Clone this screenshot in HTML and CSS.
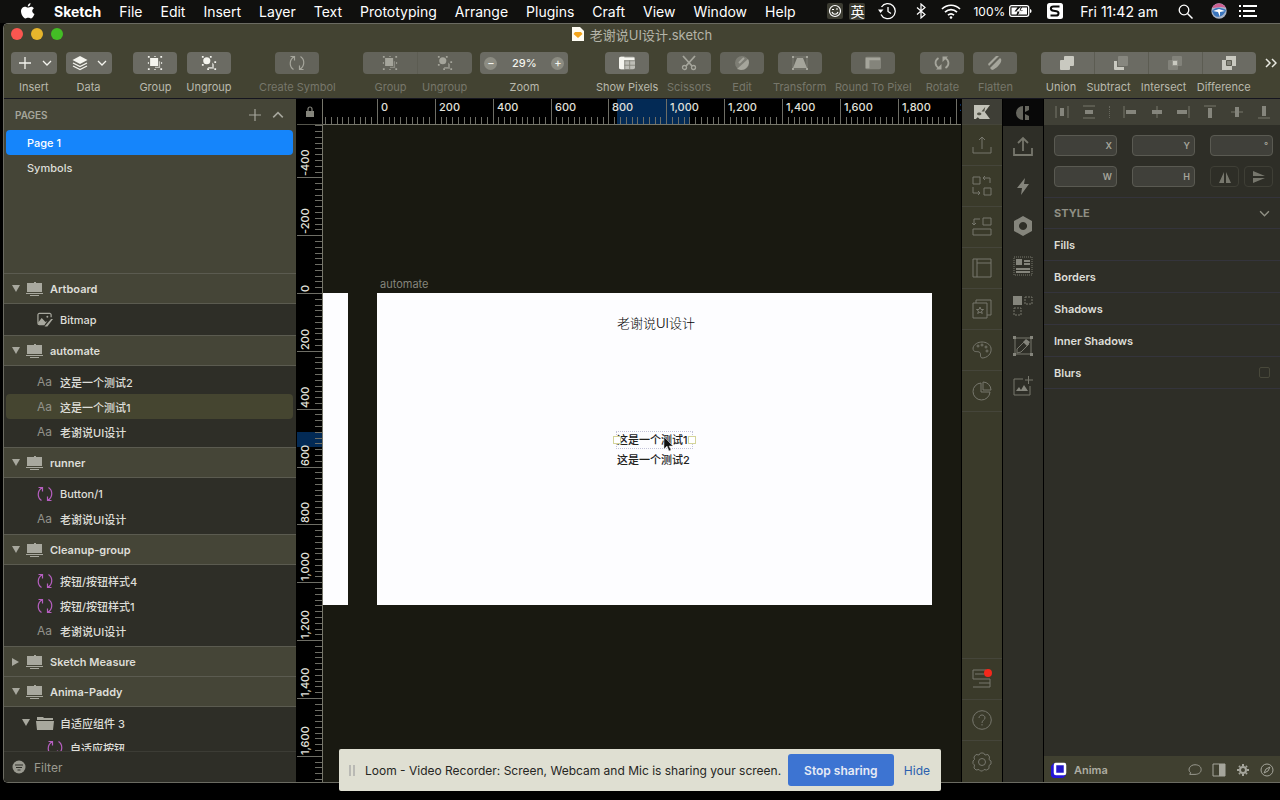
FILE: index.html
```
<!DOCTYPE html>
<html lang="zh-CN">

<head>
    <meta charset="UTF-8">
    <title>老谢说UI设计.sketch</title>
    <link rel="stylesheet" href="styles.css">
</head>

<body>
    <svg class="sprite" aria-hidden="true">
        <symbol id="chevron" viewBox="0 0 10 10"><path d="M1 3l4 4 4-4" fill="none" stroke="currentColor" stroke-width="1.3"/></symbol>
        <symbol id="artboard" viewBox="0 0 18 14"><path d="M8 0h2v1h6v9H1V1h7zM0 11h17v1H0zM4 13h9v1H4z" fill="currentColor"/></symbol>
        <symbol id="sync" viewBox="0 0 16 16"><path d="M5.500 1.500C0 4.500 0 11.500 4.500 14.500M1.500 1.500h4V5.500M10.500 14.500C16 11.500 16 4.500 11.500 1.500M14.500 14.500h-4V10.500" fill="none" stroke="currentColor" stroke-width="1.200"/></symbol>
        <symbol id="group" viewBox="0 0 18 18"><path d="M9 14h5V7" fill="none" stroke="currentColor" stroke-width="1.500" opacity=".6"/><path d="M3.500 3.500h9v9h-9z" fill="currentColor"/><path d="M1 1h2v2H1zM15 1h2v2h-2zM1 15h2v2H1zM15 15h2v2h-2zM8 1h2v1H8zM1 8h1v2H1zM16 8h1v2h-1zM8 16h2v1H8z" fill="currentColor"/></symbol>
        <symbol id="ungroup" viewBox="0 0 18 18"><circle cx="6.500" cy="6.500" r="4" fill="currentColor"/><path d="M12.500 8.500v5h-5l2 2h5v-5z" fill="currentColor" opacity=".7"/><path d="M1 1h2v2H1zM10 1h2v2h-2zM1 10h2v2H1zM7 15h2v2H7zM15 15h2v2h-2zM15 7h2v2h-2z" fill="currentColor"/></symbol>
    </svg>

    <header class="menubar">
        <nav class="menus">
            <svg class="apple" viewBox="0 0 14 16"><path d="M9.500 0C9.700 1.800 8.300 3.500 6.800 3.500 6.600 1.900 8 .3 9.500 0zM12.900 5.300c-2.500 1.600-2 4.600.6 5.700-.8 2.200-2.100 4.400-3.500 4.400-1.100 0-1.500-.7-2.800-.7s-1.700.7-2.700.7C2.200 15.400 0 11 0 8.300 0 3.900 4 3.200 5.200 3.900c.8.400 1.300.6 1.900.6.900 0 1.700-.8 3.200-.8 1.100 0 2 .6 2.600 1.600z" fill="currentColor"/></svg>
            <button class="app-name">Sketch</button>
            <button>File</button>
            <button>Edit</button>
            <button>Insert</button>
            <button>Layer</button>
            <button>Text</button>
            <button>Prototyping</button>
            <button>Arrange</button>
            <button>Plugins</button>
            <button>Craft</button>
            <button>View</button>
            <button>Window</button>
            <button>Help</button>
        </nav>
        <div class="status">
            <svg class="chip" viewBox="0 0 16 16"><rect width="16" height="16" rx="2" fill="#3c3c32"/><g fill="none" stroke="currentColor" stroke-width="1.200"><circle cx="8" cy="8" r="5.500"/><path d="M5 9c1 3 5 3 6 0M5 6.500h2M9 6h2"/></g></svg>
            <span class="ime">英</span>
            <svg class="clock" viewBox="0 0 18 18"><path d="M3.500 5A7.500 7.500 0 1 1 3 12.500M10 5v4.500l3 2" fill="none" stroke="currentColor" stroke-width="1.300"/><path d="M0 7.500h5.500L2.500 11z" fill="currentColor"/></svg>
            <svg class="bluetooth" viewBox="0 0 10 16"><path d="M1 4.500l8 7L5 15V1l4 3.500-8 7" fill="none" stroke="currentColor" stroke-width="1.200"/></svg>
            <svg class="wifi" viewBox="0 0 20 15"><path d="M1 5c5-5 13-5 18 0M4 8.200c3.500-3.500 8.500-3.500 12 0M7 11.200c2-1.800 4-1.800 6 0" fill="none" stroke="currentColor" stroke-width="1.700"/><circle cx="10" cy="13.500" r="1.300" fill="currentColor"/></svg>
            <span class="percent">100%</span>
            <svg class="battery" viewBox="0 0 23 12"><rect x=".7" y=".7" width="19" height="10.600" rx="2" fill="none" stroke="currentColor" stroke-width="1.300"/><path d="M2.500 2.500h6l-3 4h3l-1 3h-5zM13 2.500h5v7H10l4-4.500h-2.500zM21 4c2 0 2 4 0 4z" fill="currentColor"/><path d="M12 1.500L7 6.500h3.500L9 10.500l5-5h-3.500z" fill="currentColor"/></svg>
            <svg class="sogou" viewBox="0 0 16 16"><rect width="16" height="16" rx="2.500" fill="currentColor"/><path d="M12.500 3.500H6.500c-3.500 0-3.500 3.800 0 4.200l3 .5c3 .5 2.500 4.300-.5 4.300H3.500" fill="none" stroke="#0a0a08" stroke-width="2"/></svg>
            <time class="time">Fri 11:42 am</time>
            <svg class="search" viewBox="0 0 15 15"><circle cx="6" cy="6" r="4.800" fill="none" stroke="currentColor" stroke-width="1.300"/><path d="M9.500 9.500l5 5" stroke="currentColor" stroke-width="1.500"/></svg>
            <svg class="siri" viewBox="0 0 16 16"><circle cx="8" cy="8" r="7.700" fill="#a9b4c8"/><path d="M1 5c3-6 11-6 14 0-5-2-9 0-14 0z" fill="#cf5e91"/><path d="M1 8c4-5 10-3 14-1-2 6-8 9-12 5z" fill="#3a75bd"/><path d="M2 8l6-2 6 2-5 1v5L7 9z" fill="#fff"/></svg>
            <svg class="list" viewBox="0 0 18 14"><path d="M0 1h2v2H0zM4 1h14v2H4zM0 6h2v2H0zM4 6h12v2H4zM0 11h2v2H0zM4 11h14v2H4z" fill="currentColor"/></svg>
        </div>
    </header>

    <div class="window">
        <header class="chrome">
            <div class="titlebar">
                <div class="lights">
                    <button class="light close" aria-label="Close"></button>
                    <button class="light minimise" aria-label="Minimise"></button>
                    <button class="light zoom" aria-label="Full screen"></button>
                </div>
                <h1 class="title">
                    <svg class="doc" viewBox="0 0 12 14"><path d="M0 0h8l4 4v10H0z" fill="#fffdf4"/><path d="M3 5h6l1.500 2L6 11 1.500 7z" fill="#f3a51b"/></svg>
                    老谢说UI设计.sketch
                </h1>
            </div>
            <div class="toolbar">
                <div class="tool">
                    <button class="well wide" aria-label="Insert"><svg class="icon" viewBox="0 0 16 16"><path d="M8 2v12M2 8h12" stroke="currentColor" stroke-width="1.300"/></svg><svg class="drop"><use href="#chevron"/></svg></button>
                    <span>Insert</span>
                </div>
                <div class="tool">
                    <button class="well wide" aria-label="Data"><svg class="icon" viewBox="0 0 16 16"><path d="M8 1l7.500 4L8 9 .5 5z" fill="currentColor"/><path d="M1 8l7 3.500L15 8M1 11l7 3.500 7-3.500" fill="none" stroke="currentColor" stroke-width="1.300"/></svg><svg class="drop"><use href="#chevron"/></svg></button>
                    <span>Data</span>
                </div>
                <div class="tool near">
                    <button class="well" aria-label="Group"><svg class="icon"><use href="#group"/></svg></button>
                    <span>Group</span>
                </div>
                <div class="tool">
                    <button class="well" aria-label="Ungroup"><svg class="icon"><use href="#ungroup"/></svg></button>
                    <span>Ungroup</span>
                </div>
                <div class="tool apart off">
                    <button class="well" aria-label="Create Symbol"><svg class="icon"><use href="#sync"/></svg></button>
                    <span>Create Symbol</span>
                </div>
                <div class="tool apart off pair">
                    <div class="segments">
                        <button aria-label="Group"><svg class="icon"><use href="#group"/></svg></button>
                        <button aria-label="Ungroup"><svg class="icon"><use href="#ungroup"/></svg></button>
                    </div>
                    <div class="names"><span>Group</span><span>Ungroup</span></div>
                </div>
                <div class="tool">
                    <div class="well stepper">
                        <button aria-label="Zoom out">−</button>
                        <span>29%</span>
                        <button aria-label="Zoom in">+</button>
                    </div>
                    <span>Zoom</span>
                </div>
                <div class="tool apart">
                    <button class="well" aria-label="Show Pixels"><svg class="icon" viewBox="0 0 18 16"><rect y="1" width="18" height="14" rx="2" fill="currentColor" opacity=".6"/><path d="M2 1h4v14H2a2 2 0 0 1-2-2V3a2 2 0 0 1 2-2zM6 2h11v3H6z" fill="currentColor"/><path d="M6 5.500h12M6 10.500h12M6.500 5v10M12 5v10" stroke="#85857b" fill="none"/></svg></button>
                    <span>Show Pixels</span>
                </div>
                <div class="tool off">
                    <button class="well" aria-label="Scissors"><svg class="icon" viewBox="0 0 16 16"><path d="M2 1l9 10M14 1L5 11" stroke="currentColor" stroke-width="1.800"/><g fill="none" stroke="currentColor" stroke-width="1.300"><circle cx="3.500" cy="12.500" r="2"/><circle cx="12.500" cy="12.500" r="2"/></g></svg></button>
                    <span>Scissors</span>
                </div>
                <div class="tool off">
                    <button class="well" aria-label="Edit"><svg class="icon" viewBox="0 0 16 16"><circle cx="8" cy="8" r="7" fill="currentColor" opacity=".4"/><path d="M3 14L14 4c3 5-2 11-7 11z" fill="currentColor"/><path d="M5 8l5-5" stroke="currentColor" stroke-width="2"/></svg></button>
                    <span>Edit</span>
                </div>
                <div class="tool off">
                    <button class="well" aria-label="Transform"><svg class="icon" viewBox="0 0 16 16"><path d="M5 3h6l4 10H1z" fill="currentColor"/><path d="M1 2h14v12H1z" fill="none" stroke="currentColor" opacity=".4"/><path d="M0 1h2v2H0zM14 1h2v2h-2zM0 13h2v2H0zM14 13h2v2h-2z" fill="currentColor"/></svg></button>
                    <span>Transform</span>
                </div>
                <div class="tool off">
                    <button class="well" aria-label="Round To Pixel"><svg class="icon" viewBox="0 0 18 16"><rect y="1" width="18" height="14" rx="2" fill="currentColor" opacity=".5"/><path d="M1 2h16v3H5v9H1z" fill="currentColor"/></svg></button>
                    <span>Round To Pixel</span>
                </div>
                <div class="tool off">
                    <button class="well" aria-label="Rotate"><svg class="icon" viewBox="0 0 16 16"><path d="M4.500 3C0 6 1 11 5 13M11.500 13c4.500-3 3.500-8-.5-10" fill="none" stroke="currentColor" stroke-width="1.800"/><path d="M2 14.500h5.500V9zM14 1.500H8.500V7z" fill="currentColor"/></svg></button>
                    <span>Rotate</span>
                </div>
                <div class="tool off">
                    <button class="well" aria-label="Flatten"><svg class="icon" viewBox="0 0 16 16"><path d="M1 9l8-8h3L2 11zM3 13L13 3c4 2-2 10-8 12z" fill="currentColor"/></svg></button>
                    <span>Flatten</span>
                </div>
                <div class="tool booleans">
                    <div class="segments">
                        <button aria-label="Union"><svg class="icon" viewBox="0 0 16 16"><path d="M6 1h8a1 1 0 0 1 1 1v8a1 1 0 0 1-1 1h-3v3a1 1 0 0 1-1 1H2a1 1 0 0 1-1-1V6a1 1 0 0 1 1-1h3V2a1 1 0 0 1 1-1z" fill="currentColor"/></svg></button>
                        <button aria-label="Subtract"><svg class="icon" viewBox="0 0 16 16"><rect x="5" y="1" width="10" height="10" rx="1" fill="currentColor" opacity=".3"/><path d="M1 6h3v6h7v3H2a1 1 0 0 1-1-1z" fill="currentColor"/></svg></button>
                        <button aria-label="Intersect"><svg class="icon" viewBox="0 0 16 16"><rect x="5" y="1" width="10" height="10" rx="1" fill="currentColor" opacity=".25"/><rect x="1" y="5" width="10" height="10" rx="1" fill="currentColor" opacity=".25"/><path d="M6 6h4v4H6z" fill="currentColor"/></svg></button>
                        <button aria-label="Difference"><svg class="icon" viewBox="0 0 16 16"><path d="M5 1h10v10h-4v4H1V5h4z" fill="currentColor"/><path d="M5.500 5.500h5v5h-5z" fill="#85857b" stroke="#5b5b50"/></svg></button>
                    </div>
                    <div class="names"><span>Union</span><span>Subtract</span><span>Intersect</span><span>Difference</span></div>
                </div>
                <button class="more" aria-label="More tools"><svg viewBox="0 0 12 10"><path d="M1 1l4 4-4 4M7 1l4 4-4 4" fill="none" stroke="currentColor" stroke-width="1.500"/></svg></button>
            </div>
        </header>

        <main class="workspace">
            <aside class="sidebar">
                <section class="pages">
                    <div class="pages-head">
                        <h2>PAGES</h2>
                        <button aria-label="Add page"><svg viewBox="0 0 12 12"><path d="M6 0v12M0 6h12" stroke="currentColor" stroke-width="1.200"/></svg></button>
                        <button aria-label="Collapse pages"><svg class="up"><use href="#chevron"/></svg></button>
                    </div>
                    <button class="page current">Page 1</button>
                    <button class="page">Symbols</button>
                </section>
                <section class="layers">
                    <h3 class="board"><i class="caret"></i><svg><use href="#artboard"/></svg>Artboard</h3>
                    <ul>
                        <li><svg class="bitmap" viewBox="0 0 17 16"><path d="M15 5V2.500A1.500 1.500 0 0 0 13.500 1h-11A1.500 1.500 0 0 0 1 2.500v9A1.500 1.500 0 0 0 2.500 13H8" fill="none" stroke="currentColor" stroke-width="1.300"/><path d="M1 11l4-5 4 4 2-1-3 4H2zM8 15l7-8h2l-6 8z" fill="currentColor"/><circle cx="11" cy="4.500" r="1" fill="currentColor"/></svg>Bitmap</li>
                    </ul>
                    <h3 class="board"><i class="caret"></i><svg><use href="#artboard"/></svg>automate</h3>
                    <ul>
                        <li><b class="aa">Aa</b>这是一个测试2</li>
                        <li class="picked"><b class="aa">Aa</b>这是一个测试1</li>
                        <li><b class="aa">Aa</b>老谢说UI设计</li>
                    </ul>
                    <h3 class="board"><i class="caret"></i><svg><use href="#artboard"/></svg>runner</h3>
                    <ul>
                        <li><svg class="sync"><use href="#sync"/></svg>Button/1</li>
                        <li><b class="aa">Aa</b>老谢说UI设计</li>
                    </ul>
                    <h3 class="board"><i class="caret"></i><svg><use href="#artboard"/></svg>Cleanup-group</h3>
                    <ul>
                        <li><svg class="sync"><use href="#sync"/></svg>按钮/按钮样式4</li>
                        <li><svg class="sync"><use href="#sync"/></svg>按钮/按钮样式1</li>
                        <li><b class="aa">Aa</b>老谢说UI设计</li>
                    </ul>
                    <h3 class="board shut"><i class="caret"></i><svg><use href="#artboard"/></svg>Sketch Measure</h3>
                    <h3 class="board"><i class="caret"></i><svg><use href="#artboard"/></svg>Anima-Paddy</h3>
                    <ul>
                        <li class="folder"><i class="caret"></i><svg viewBox="0 0 18 14"><path d="M1 1h6l1 1h9v2H1zM0 5h18l-1 9H1z" fill="currentColor"/></svg>自适应组件 3</li>
                        <li class="nested"><svg class="sync"><use href="#sync"/></svg>自适应按钮</li>
                    </ul>
                </section>
                <label class="filter">
                    <svg viewBox="0 0 14 14"><circle cx="7" cy="7" r="6.500" fill="currentColor"/><path d="M3 5h8M4 7.500h6M5.500 10h3" stroke="#2f2f29" stroke-width="1.200"/></svg>
                    <input type="text" placeholder="Filter" aria-label="Filter">
                </label>
            </aside>

            <section class="canvas">
                <div class="corner"><svg viewBox="0 0 8 11"><path d="M2 5V3a2 2 0 0 1 4 0v2" fill="none" stroke="currentColor" stroke-width="1.200"/><path d="M0 5h8v6H0z" fill="currentColor"/></svg></div>
                <svg class="ruler across" id="ruler-x"></svg>
                <svg class="ruler down" id="ruler-y"></svg>
                <div class="stage">
                    <div class="sheet cut"></div>
                    <span class="sheet-name">automate</span>
                    <div class="sheet main">
                        <p class="heading">老谢说UI设计</p>
                        <p class="line first">这是一个测试1</p>
                        <p class="line second">这是一个测试2</p>
                    </div>
                    <svg class="pointer" viewBox="0 0 10 16"><path d="M1 1v12l3-3 2 5 2-1-2-4h4z" fill="#111" stroke="#ddd" stroke-width=".5"/></svg>
                </div>
            </section>

            <nav class="rail craft">
                <div class="rail-head"><svg viewBox="0 0 17 15"><path d="M0 0h17l-5.500 7.500L17 15H6l-2-2-2 2H0z" fill="currentColor"/><path d="M3 9.500c1-2 4-2 5 0-1 2-4 2-5 0zM8 7l4-5-1 5z" fill="#55554a"/></svg></div>
                <button aria-label="Upload"><svg viewBox="0 0 20 20"><path d="M1 12v6h18v-6M10 14V2M7 5l3-3 3 3"/></svg></button>
                <button aria-label="Replace"><svg viewBox="0 0 20 20"><path d="M1 1h7v7H1zM12 12h7v7h-7zM11 2h7v5M13 0l-2 2 2 2M1 11v6h7M6 15l2 2-2 2"/></svg></button>
                <button aria-label="Duplicate"><svg viewBox="0 0 20 20"><path d="M11 1h8v7h-8zM1 12h18v6H1zM8 2H2v6M0 6l2 2 2-2"/></svg></button>
                <button aria-label="Layout"><svg viewBox="0 0 20 20"><path d="M1 1h18v18H1zM5 1v18M5 5h14"/></svg></button>
                <button aria-label="Library"><svg viewBox="0 0 20 20"><path d="M1 4h14v15H1zM4 4V1h15v15h-4M8 8l1 2.500h2.500l-2 1.500.8 2.500L8 13l-2.300 1.500.8-2.500-2-1.500H7z"/></svg></button>
                <button aria-label="Palette"><svg viewBox="0 0 20 20"><path d="M1 8C3 0 17 0 19 8c1 6-4 10-9 10-3-1 0-5-3-6-2-1-6 1-6-4z"/><circle cx="6" cy="6" r="1"/><circle cx="10" cy="5" r="1"/><circle cx="14" cy="7" r="1"/><circle cx="15" cy="11" r="1"/></svg></button>
                <button aria-label="Stats"><svg viewBox="0 0 20 20"><path d="M9 2a8.500 8.500 0 1 0 9 9H9zM11 1a8 8 0 0 1 8 8h-8z"/></svg></button>
                <div class="fill"></div>
                <button class="alert" aria-label="Sync"><svg viewBox="0 0 20 20"><path d="M14 1H1v9h17v8H1M3 5h9M7 14h11"/></svg></button>
                <button aria-label="Help"><svg viewBox="0 0 20 20"><circle cx="10" cy="10" r="9.300"/><path d="M7 8c0-4 6-4 6 0 0 2-3 2-3 5M10 14v1.500"/></svg></button>
                <button aria-label="Settings"><svg viewBox="0 0 20 20"><path d="M8.500 1h3l1.500 2 3-.5L17.500 5 17 7.500l2 1.500v3l-2 1.500v3L14.500 18 12 17.500 10.500 19h-2L7 17.500 4 18l-2-2 .5-3L1 11.500V9l1.500-1.500L2 5l2-2.500 3 .5z"/><circle cx="10" cy="10" r="3.500"/></svg></button>
            </nav>

            <nav class="rail plugin">
                <div class="rail-head"><svg viewBox="0 0 16 16"><path d="M8 1v14A7 7 0 0 1 8 1zM10 1h4v4l-4 2zM10 9l4 2v4h-4z" fill="currentColor"/></svg></div>
                <button aria-label="Export"><svg viewBox="0 0 20 20"><path d="M1 12v7h18v-7M10 15V2M5 7l5-5 5 5" stroke-width="1.800"/></svg></button>
                <button aria-label="Actions"><svg viewBox="0 0 20 20"><path class="solid" d="M12 2L4 12h5l-1 7 8-11h-5z"/></svg></button>
                <button aria-label="Components"><svg viewBox="0 0 20 20"><path class="solid" fill-rule="evenodd" d="M10 0l9 5v10l-9 5-9-5V5zM10 6a4 4 0 1 0 .1 0z"/></svg></button>
                <button aria-label="Content"><svg viewBox="0 0 20 20"><path d="M1 1h18v18H1z" stroke-dasharray="1 1"/><path class="solid" d="M3 3h6v6H3zM11 4h6v2h-6zM11 7h6v2h-6zM3 12h14v2H3zM3 15h14v2H3z"/></svg></button>
                <button aria-label="Arrange"><svg viewBox="0 0 20 20"><path class="solid" d="M0 0h9v9H0z"/><path d="M12 1h7v7h-7zM1 12h7v7H1z" stroke-dasharray="2 1"/></svg></button>
                <button aria-label="Edit shape"><svg viewBox="0 0 20 20"><path d="M2 2h16v16H2zM4 13l8-8 4 3-8 8-4 1z"/><path class="solid" d="M0 0h3v3H0zM17 0h3v3h-3zM0 17h3v3H0zM17 17h3v3h-3zM10 6l3-3 4 3-3 4z"/></svg></button>
                <button aria-label="Add picture"><svg viewBox="0 0 20 20"><path d="M10 3H1v16h16v-9M15.500 0v8M12 4h8"/><path class="solid" d="M3 15l3-4 2 3 3-5 4 6z"/></svg></button>
            </nav>

            <aside class="inspector">
                <div class="aligns">
                    <button aria-label="Distribute horizontally"><svg viewBox="0 0 14 14"><path d="M1 1v12M13 1v12"/><path class="solid" d="M5 3h4v8H5z"/></svg></button>
                    <button aria-label="Distribute vertically"><svg viewBox="0 0 14 14"><path d="M1 1h12M1 13h12"/><path class="solid" d="M3 5h8v4H3z"/></svg></button>
                    <i class="dots"></i>
                    <button aria-label="Align left"><svg viewBox="0 0 14 14"><path d="M1 1v12"/><path class="solid" d="M3 5h10v4H3z"/></svg></button>
                    <button aria-label="Align centre"><svg viewBox="0 0 14 14"><path d="M7 1v12"/><path class="solid" d="M2 5h10v4H2z"/></svg></button>
                    <button aria-label="Align right"><svg viewBox="0 0 14 14"><path d="M13 1v12"/><path class="solid" d="M1 5h10v4H1z"/></svg></button>
                    <button aria-label="Align top"><svg viewBox="0 0 14 14"><path d="M1 1h12"/><path class="solid" d="M5 3h4v10H5z"/></svg></button>
                    <button aria-label="Align middle"><svg viewBox="0 0 14 14"><path d="M1 7h12"/><path class="solid" d="M5 2h4v10H5z"/></svg></button>
                    <button aria-label="Align bottom"><svg viewBox="0 0 14 14"><path d="M1 13h12"/><path class="solid" d="M5 1h4v10H5z"/></svg></button>
                </div>
                <div class="fields">
                    <label class="field"><input type="text"><span>X</span></label>
                    <label class="field"><input type="text"><span>Y</span></label>
                    <label class="field"><input type="text"><span>°</span></label>
                    <label class="field"><input type="text"><span>W</span></label>
                    <label class="field"><input type="text"><span>H</span></label>
                    <div class="flips">
                        <button aria-label="Flip horizontally"><svg viewBox="0 0 12 12"><path d="M5 1v11H0zM7 1v11h5z" fill="currentColor"/></svg></button>
                        <button aria-label="Flip vertically"><svg viewBox="0 0 12 12"><path d="M0 5V0l12 5zM0 7v5l12-5z" fill="currentColor"/></svg></button>
                    </div>
                </div>
                <div class="row style-head"><h2>STYLE</h2><svg><use href="#chevron"/></svg></div>
                <div class="row">Fills</div>
                <div class="row">Borders</div>
                <div class="row">Shadows</div>
                <div class="row">Inner Shadows</div>
                <label class="row">Blurs <input type="checkbox"></label>
                <footer class="anima">
                    <svg class="logo" viewBox="0 0 16 16"><path d="M0 4l3-3h12v12l-3 3H2l-2-2z" fill="#2414d8"/><rect x="4" y="2" width="10" height="10" rx="1" fill="#2418c8" stroke="#fff" stroke-width="2.500"/></svg>
                    <b>Anima</b>
                    <button aria-label="Comments"><svg viewBox="0 0 16 14"><path d="M8 1c4 0 7 2 7 5.500S12 12 8 12H2l1-2C-1 7 2 1 8 1z"/></svg></button>
                    <button aria-label="Panels"><svg viewBox="0 0 14 14"><path d="M1 1h12v12H1z"/><path class="solid" d="M7 1h6v12H7z"/></svg></button>
                    <button aria-label="Preferences"><svg viewBox="0 0 14 14"><circle cx="7" cy="7" r="3" stroke-width="2"/><path d="M7 1v2M7 11v2M1 7h2M11 7h2M3 3l1 1M10 10l1 1M3 11l1-1M10 4l1-1" stroke-width="2"/></svg></button>
                    <button aria-label="Preview"><svg viewBox="0 0 14 14"><circle cx="7" cy="7" r="6"/><path d="M10 4L8 8 4 10l2-4z"/></svg></button>
                </footer>
            </aside>
        </main>
    </div>

    <div class="sharing" role="dialog">
        <i class="grip"></i>
        <p>Loom - Video Recorder: Screen, Webcam and Mic is sharing your screen.</p>
        <button class="stop">Stop sharing</button>
        <a href="#">Hide</a>
    </div>

    <script src="main.js"></script>
</body>

</html>
```
FILE: styles.css
```
* {
    box-sizing: border-box;
}

body {
    margin: 0;
    height: 100vh;
    padding-bottom: 17px;
    display: flex;
    flex-direction: column;
    overflow: hidden;
    background: #000;
    color: #deded8;
    font-family: Inter, "Noto Sans CJK SC", sans-serif;
    font-size: 11px;
}

h1, h2, h3, p, ul {
    margin: 0;
    padding: 0;
    font-size: inherit;
    list-style: none;
}

button {
    padding: 0;
    border: none;
    background: none;
    color: inherit;
    font: inherit;
    display: flex;
    align-items: center;
    justify-content: center;
}

svg {
    display: block;
    flex: none;
}

.sprite {
    position: absolute;
    width: 0;
    height: 0;
}

/* system menu bar */
.menubar {
    height: 23px;
    flex: none;
    display: flex;
    align-items: center;
    justify-content: space-between;
    padding: 0 23px 1px 21px;
    background: #10100e;
    color: #fff;
    font-size: 14px;
}

.menus,
.status {
    display: flex;
    align-items: center;
}

.menus {
    gap: 18px;
}

.apple {
    width: 14px;
    height: 16px;
    margin-right: 1px;
}

.app-name {
    font-weight: 700;
}

.chip,
.sogou,
.siri {
    width: 16px;
    height: 16px;
}

.ime {
    margin-left: 6px;
    padding: 0 1px;
    font-size: 14px;
    line-height: 17px;
    background: #3c3c32;
    border-radius: 2px;
}

.clock {
    width: 18px;
    height: 18px;
    margin-left: 13px;
}

.bluetooth {
    width: 10px;
    height: 16px;
    margin-left: 20px;
}

.wifi {
    width: 20px;
    height: 15px;
    margin-left: 15px;
}

.percent {
    margin-left: 12px;
    font-size: 12px;
}

.battery {
    width: 23px;
    height: 12px;
    margin-left: 4px;
}

.sogou {
    margin-left: 15px;
}

.time {
    margin-left: 17px;
    font-size: 14px;
}

.search {
    width: 15px;
    height: 15px;
    margin-left: 20px;
}

.siri {
    margin-left: 18px;
}

.list {
    width: 18px;
    height: 14px;
    margin-left: 12px;
}

/* window frame */
.window {
    flex: 1;
    min-height: 0;
    margin-left: 3px;
    display: flex;
    flex-direction: column;
    border: 1px solid #6b6b62;
    border-right: none;
    border-radius: 5px 0 0 5px;
    overflow: hidden;
}

.chrome {
    height: 75px;
    flex: none;
    background: #434332;
    border-bottom: 1px solid #15151f;
}

.titlebar {
    height: 20px;
    display: grid;
    grid-template-columns: 1fr auto 1fr;
    align-items: center;
}

.lights {
    display: flex;
    gap: 8px;
    padding-left: 7px;
}

.light {
    width: 12px;
    height: 12px;
    border-radius: 50%;
}

.close {
    background: #fb5650;
}

.minimise {
    background: #e6b52c;
}

.zoom {
    background: #43bd25;
}

.title {
    display: flex;
    align-items: center;
    gap: 6px;
    font-size: 13px;
    font-weight: 400;
    color: #b4b4a8;
}

.doc {
    width: 12px;
    height: 14px;
}

.toolbar {
    display: flex;
    gap: 9px;
    padding: 8px 3px 0 7px;
}

.tool {
    min-width: 44px;
    display: flex;
    flex-direction: column;
    align-items: center;
    gap: 6px;
    color: #b9b9ad;
    line-height: 14px;
    white-space: nowrap;
}

.tool.off {
    color: #77776b;
}

.near {
    margin-left: 13px;
}

.apart {
    margin-left: 19px;
}

.well,
.segments {
    width: 44px;
    height: 22px;
    border-radius: 4px;
    background: #6b6b63;
    color: #f4f4ee;
}

.off .well,
.off .segments {
    background: #63635a;
    color: #a5a59b;
}

.wide {
    width: 46px;
    gap: 9px;
    padding-left: 2px;
}

.icon {
    width: 16px;
    height: 16px;
}

.drop {
    width: 10px;
    height: 10px;
}

.segments,
.names {
    display: flex;
}

.segments button {
    flex: 1;
}

.segments button + button {
    border-left: 1px solid #5c5c52;
}

.pair,
.pair .segments {
    width: 109px;
}

.names {
    width: 100%;
    justify-content: space-around;
}

.pair .names span {
    flex: 1;
    text-align: center;
}

.stepper {
    width: 88px;
    padding: 0 4px;
    display: flex;
    align-items: center;
    justify-content: space-between;
    font-weight: 500;
}

.stepper button {
    width: 13px;
    height: 13px;
    border-radius: 50%;
    background: #8c8c82;
}

.booleans {
    margin-left: 15px;
}

.booleans,
.booleans .segments {
    width: 215px;
}

.booleans .names {
    width: 205px;
    justify-content: space-between;
}

.booleans .segments {
    color: #c9c9c0;
}

.more {
    height: 22px;
    margin-left: 1px;
    color: #e8e8e0;
}

.more svg {
    width: 12px;
    height: 10px;
}

.workspace {
    flex: 1;
    min-height: 0;
    display: grid;
    grid-template-columns: 292px 1fr 41px 41px 237px;
    grid-template-rows: minmax(0, 1fr);
}

/* page and layer lists */
.sidebar {
    display: flex;
    flex-direction: column;
    background: #2e2e27;
}

.pages {
    height: 174px;
    flex: none;
    padding: 0 3px 0 2px;
    background: #454537;
}

.pages-head {
    height: 31px;
    display: flex;
    align-items: center;
    gap: 11px;
    padding: 0 9px;
    color: #a5a59b;
}

.pages-head h2 {
    flex: 1;
    font-size: 10px;
    font-weight: 600;
}

.pages-head svg {
    width: 12px;
    height: 12px;
}

.up {
    transform: rotate(180deg);
}

.page {
    width: 100%;
    height: 25px;
    justify-content: flex-start;
    padding-left: 21px;
    border-radius: 4px;
    font-weight: 500;
}

.current {
    background: #1585fb;
    color: #fff;
}

.layers {
    flex: 1;
    min-height: 0;
    overflow: hidden;
}

.board {
    height: 31px;
    display: flex;
    align-items: center;
    gap: 6px;
    padding-left: 8px;
    background: #454537;
    border: 1px solid #5b5b50;
    border-width: 1px 0;
    font-weight: 600;
}

.board svg {
    width: 18px;
    height: 14px;
    color: #a8a89e;
}

.shut {
    height: 30px;
    border-bottom: none;
}

.caret {
    border: 4px solid transparent;
    border-top: 7px solid #a8a89e;
    border-bottom: none;
}

.shut .caret {
    margin-right: 1px;
    border: 4px solid transparent;
    border-left: 7px solid #a8a89e;
    border-right: none;
}

.layers ul {
    padding: 3px 3px 3px 2px;
}

.layers li {
    height: 25px;
    display: flex;
    align-items: center;
    padding-left: 31px;
    gap: 7px;
    border-radius: 4px;
    font-weight: 500;
}

.layers li svg {
    width: 16px;
    height: 16px;
    color: #a8a89e;
}

.layers li .sync {
    color: #b65fc0;
}

.layers .picked {
    background: #454530;
}

.aa {
    width: 16px;
    color: #92928a;
    font-size: 12px;
    font-weight: 400;
}

.layers .folder {
    padding-left: 16px;
    gap: 6px;
}

.layers .folder svg {
    width: 18px;
    height: 14px;
}

.layers .nested {
    padding-left: 41px;
}

.filter {
    height: 31px;
    flex: none;
    display: flex;
    align-items: center;
    gap: 8px;
    padding-left: 8px;
    border-top: 1px solid #3c3c35;
    color: #9a9a90;
}

.filter svg {
    width: 14px;
    height: 14px;
}

.filter input {
    width: 100%;
    padding: 0;
    border: none;
    background: none;
    font: inherit;
    font-size: 12px;
}

.filter input::placeholder {
    color: #9a9a90;
}

/* canvas */
.canvas {
    display: grid;
    grid-template-columns: 26px minmax(0, 1fr);
    grid-template-rows: 26px minmax(0, 1fr);
    border-left: 1px solid #000;
    background: #191911;
}

.corner {
    display: flex;
    align-items: center;
    justify-content: center;
    background: #000;
    border-right: 1px solid #77776b;
    border-bottom: 1px solid #55554c;
    color: #85857c;
}

.corner svg {
    width: 8px;
    height: 11px;
}

.ruler {
    width: 100%;
    height: 100%;
    background: #000;
    fill: #e2e2dc;
    font-size: 11px;
    shape-rendering: crispEdges;
}

.across {
    border-bottom: 1px solid #77776b;
}

.down {
    border-right: 1px solid #77776b;
}

.ruler .span {
    fill: #032a55;
}

.ruler .tick {
    fill: #6e6e66;
}

.ruler text {
    font-weight: 500;
}

.stage {
    position: relative;
    overflow: hidden;
}

.sheet {
    position: absolute;
    top: 168px;
    height: 312px;
    background: #fdfdff;
    color: #22221c;
}

.cut {
    left: 0;
    width: 25px;
}

.main {
    left: 54px;
    width: 555px;
}

.sheet-name {
    position: absolute;
    left: 57px;
    top: 152px;
    line-height: 14px;
    color: #85857c;
}

.sheet p {
    position: absolute;
    left: 240px;
    line-height: 16px;
    white-space: nowrap;
}

.sheet .heading {
    top: 22px;
    font-size: 13px;
    font-weight: 300;
    color: #000;
}

.sheet .line {
    font-weight: 500;
}

.sheet .first {
    top: 139px;
    width: 75px;
    outline: 1px dotted #c3c3d8;
}

.first::before,
.first::after {
    content: "";
    position: absolute;
    top: 4px;
    left: -4px;
    width: 6px;
    height: 6px;
    background: #fff;
    border: 1px solid #d4d49a;
}

.first::after {
    left: auto;
    right: -4px;
}

.sheet .second {
    top: 159px;
}

.pointer {
    position: absolute;
    left: 340px;
    top: 311px;
    width: 10px;
    height: 16px;
}

/* plugin rails */
.rail {
    display: flex;
    flex-direction: column;
    border-left: 1px solid #000;
    background: #2e2e27;
}

.rail-head {
    height: 26px;
    flex: none;
    display: flex;
    align-items: center;
    justify-content: center;
    color: #c2c2b8;
}

.rail-head svg {
    width: 16px;
    height: 16px;
}

.rail button {
    height: 40px;
    flex: none;
}

.rail button svg {
    width: 20px;
    height: 20px;
    fill: none;
    stroke: #77776d;
}

.rail .solid,
.inspector .solid {
    fill: #85857c;
    stroke: none;
}

.plugin .rail-head {
    height: 27px;
    background: #080808;
    color: #66665e;
}

.craft {
    background: #3a3a2a;
}

.craft button {
    height: 41px;
    border-bottom: 1px solid #45453a;
}

.craft .rail-head {
    background: #3e3e36;
    border-bottom: 1px solid #45453a;
}

.craft .fill {
    flex: 1;
    border-bottom: 1px solid #45453a;
}

.craft button:last-child {
    border-bottom: none;
}

.alert {
    position: relative;
}

.alert::after {
    content: "";
    position: absolute;
    top: 10px;
    left: 22px;
    width: 8px;
    height: 8px;
    border-radius: 50%;
    background: #f4281c;
}

/* inspector */
.inspector {
    display: flex;
    flex-direction: column;
    border-left: 1px solid #000;
    background: #2e2e27;
}

.aligns {
    height: 26px;
    flex: none;
    display: flex;
    align-items: center;
    justify-content: space-between;
    padding: 0 9px 0 11px;
    background: #404036;
}

.aligns svg {
    width: 14px;
    height: 14px;
}

.inspector svg {
    fill: none;
    stroke: #77776a;
}

.dots {
    height: 12px;
    border-left: 1px dotted #66665c;
}

.fields {
    display: grid;
    grid-template-columns: repeat(3, 1fr);
    gap: 10px 15px;
    padding: 10px 7px 10px 10px;
}

.field {
    height: 21px;
    display: flex;
    align-items: center;
    padding-right: 4px;
    border: 1px solid #5a5a52;
    border-radius: 4px;
    background: #40403a;
    color: #a5a59b;
    font-size: 9px;
    font-weight: 600;
}

.field input {
    width: 100%;
    min-width: 0;
    border: none;
    outline: none;
    background: none;
    color: inherit;
}

.flips {
    display: flex;
    gap: 5px;
}

.flips button {
    flex: 1;
    border: 1px solid #3f3f36;
    border-radius: 4px;
    color: #77776d;
}

.flips svg {
    width: 12px;
    height: 12px;
    stroke: none;
}

.row {
    height: 32px;
    flex: none;
    display: flex;
    align-items: center;
    justify-content: space-between;
    padding: 0 10px;
    border-bottom: 1px solid #34343c;
    font-weight: 600;
}

.style-head {
    border-top: 1px solid #34343c;
    color: #8f8f84;
}

.style-head svg {
    width: 11px;
    height: 11px;
}

.row input {
    appearance: none;
    width: 11px;
    height: 11px;
    margin: 0;
    border: 1px solid #48483a;
    border-radius: 2px;
}

.anima {
    margin-top: auto;
    height: 26px;
    display: flex;
    align-items: center;
    gap: 10px;
    padding: 1px 6px 0 7px;
    background: #404030;
    color: #adada2;
}

.anima b {
    flex: 1;
    font-weight: 600;
    margin-left: -3px;
}

.anima svg {
    width: 14px;
    height: 14px;
    stroke: #a5a59b;
}

.anima .logo {
    width: 16px;
    height: 16px;
    stroke: none;
}

.anima .solid {
    fill: #a5a59b;
}

/* screen sharing notice */
.sharing {
    position: absolute;
    left: 50%;
    bottom: 9px;
    transform: translateX(-50%);
    width: 602px;
    height: 42px;
    display: flex;
    align-items: center;
    padding: 0 11px 0 10px;
    border-radius: 2px;
    background: #dfdfd2;
    color: #26261f;
    font-size: 12px;
    white-space: nowrap;
}

.grip {
    width: 6px;
    height: 11px;
    margin-right: 10px;
    border: 2px solid #b9b9b4;
    border-width: 0 2px;
}

.sharing p {
    flex: 1;
}

.stop {
    width: 106px;
    height: 32px;
    border-radius: 3px;
    background: #3d74d2;
    color: #e6ebf5;
    font-weight: 600;
}

.sharing a {
    margin-left: 10px;
    color: #2b5fae;
    text-decoration: none;
}
```
FILE: main.js
```
// canvas rulers: 200 units between long ticks at 29% zoom
const STEP = 57.85;
const NS = 'http://www.w3.org/2000/svg';

function add(svg, name, attrs, text) {
    const el = document.createElementNS(NS, name);
    Object.keys(attrs).forEach(key => el.setAttribute(key, attrs[key]));
    if (text) el.textContent = text;
    svg.appendChild(el);
}

function drawRuler(id, origin, span, vertical) {
    const svg = document.getElementById(id);
    const box = svg.getBoundingClientRect();
    const length = vertical ? box.height : box.width;

    if (vertical) {
        add(svg, 'rect', { class: 'span', x: 0, y: span[0], width: 25, height: span[1] });
    } else {
        add(svg, 'rect', { class: 'span', x: span[0], y: 0, width: span[1], height: 25 });
    }

    for (let i = -40; i < 120; i++) {
        const at = Math.round(origin + i * STEP / 10);
        if (at < 0 || at > length) continue;
        const major = i % 10 === 0;
        const size = major ? 25 : 7;
        const label = (i * 20).toLocaleString('en-US');
        if (vertical) {
            add(svg, 'rect', { class: 'tick', x: 25 - size, y: at, width: size, height: 1 });
            if (major) add(svg, 'text', { transform: `translate(12 ${at - 1}) rotate(-90)` }, label);
        } else {
            add(svg, 'rect', { class: 'tick', x: at, y: 25 - size, width: 1, height: size });
            if (major) add(svg, 'text', { x: at + 4, y: 12 }, label);
        }
    }
}

drawRuler('ruler-x', 54, [294, 73], false);
drawRuler('ruler-y', 168, [307, 15], true);
```
